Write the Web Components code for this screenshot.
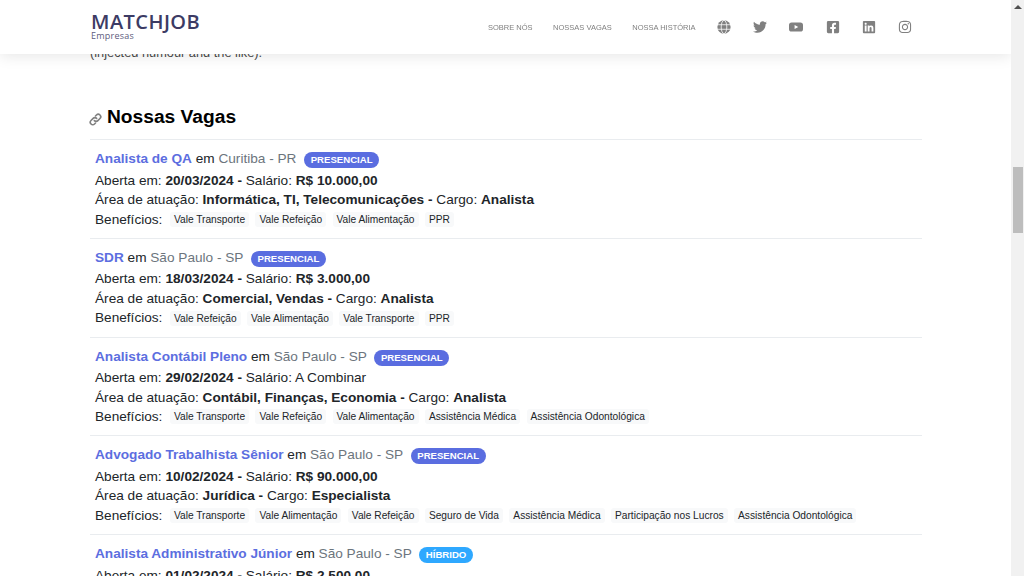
<!DOCTYPE html>
<html lang="pt-BR">
<head>
<meta charset="utf-8">
<title>MatchJob Empresas</title>
<style>
  html, body { margin: 0; height: 100%; overflow: hidden; background: #fff; }
  body { font-family: "Liberation Sans", Arial, sans-serif; }
</style>
</head>
<body>
<app-page>
  <site-header slot="header"></site-header>
  <p class="intro" slot="intro" style="margin:0">(injected humour and the like).</p>
  <job-list>
    <job-row title-text="Analista de QA" place="Curitiba - PR" mode="PRESENCIAL" opened="20/03/2024" salary="R$ 10.000,00" area="Informática, TI, Telecomunicações" role="Analista" perks="Vale Transporte|Vale Refeição|Vale Alimentação|PPR"></job-row>
    <job-row title-text="SDR" place="São Paulo - SP" mode="PRESENCIAL" opened="18/03/2024" salary="R$ 3.000,00" area="Comercial, Vendas" role="Analista" perks="Vale Refeição|Vale Alimentação|Vale Transporte|PPR"></job-row>
    <job-row title-text="Analista Contábil Pleno" place="São Paulo - SP" mode="PRESENCIAL" opened="29/02/2024" salary-plain="A Combinar" area="Contábil, Finanças, Economia" role="Analista" perks="Vale Transporte|Vale Refeição|Vale Alimentação|Assistência Médica|Assistência Odontológica"></job-row>
    <job-row title-text="Advogado Trabalhista Sênior" place="São Paulo - SP" mode="PRESENCIAL" opened="10/02/2024" salary="R$ 90.000,00" area="Jurídica" role="Especialista" perks="Vale Transporte|Vale Alimentação|Vale Refeição|Seguro de Vida|Assistência Médica|Participação nos Lucros|Assistência Odontológica"></job-row>
    <job-row title-text="Analista Administrativo Júnior" place="São Paulo - SP" mode="HÍBRIDO" opened="01/02/2024" salary="R$ 2.500,00" area="Administração" role="Analista" perks="Vale Transporte"></job-row>
  </job-list>
</app-page>

<script>
class AppPage extends HTMLElement {
  constructor() {
    super();
    this.attachShadow({ mode: 'open' }).innerHTML = `
      <style>
        :host { display: flex; height: 576px; overflow: hidden; position: relative; color: #212529; }
        .view { flex: 1; min-width: 0; overflow: hidden; position: relative; }
        .content { padding: 44px 90px 0 90px; }
        .intro-slot { display: block; font-size: 12.8px; line-height: 17px; color: #4a4a4a; }
        h2 { display: flex; align-items: center; margin: 41px 0 0; height: 30px; font-size: 19.2px; font-weight: 700; color: #000; }
        svg { width: 13px; height: 13px; margin: 4px 5px 0 -1px; color: #808080; }
        .scrollbar { flex: none; width: 13px; background: #f1f1f1; display: flex; flex-direction: column; align-items: center; }
        .arrow { width: 0; height: 0; margin-top: 5px; border: 4px solid transparent; border-top: 0; border-bottom: 4px solid #505050; }
        .thumb { width: 10px; height: 66px; margin-top: 158px; background: #bdbdbd; }
      </style>
      <div class="view">
        <slot name="header"></slot>
        <div class="content">
          <slot class="intro-slot" name="intro"></slot>
          <h2>
            <svg viewBox="0 0 16 16" fill="none" stroke="currentColor" stroke-width="2" stroke-linecap="round"><path d="M6.6 9.4a3 3 0 0 0 4.3 0l2.6-2.6a3 3 0 0 0-4.3-4.3L8 3.7"/><path d="M9.4 6.6a3 3 0 0 0-4.3 0L2.5 9.2a3 3 0 0 0 4.3 4.3L8 12.3"/></svg>
            Nossas Vagas
          </h2>
          <slot></slot>
        </div>
      </div>
      <div class="scrollbar"><div class="arrow"></div><div class="thumb"></div></div>`;
  }
}

const ICONS = {
  twitter: ['0 0 512 512', 'M459.37 151.716c.325 4.548.325 9.097.325 13.645 0 138.72-105.583 298.558-298.558 298.558-59.452 0-114.68-17.219-161.137-47.106 8.447.974 16.568 1.299 25.34 1.299 49.055 0 94.213-16.568 130.274-44.832-46.132-.975-84.792-31.188-98.112-72.772 6.498.974 12.995 1.624 19.818 1.624 9.421 0 18.843-1.3 27.614-3.573-48.081-9.747-84.143-51.98-84.143-102.985v-1.299c13.969 7.797 30.214 12.67 47.431 13.319-28.264-18.843-46.781-51.005-46.781-87.391 0-19.492 5.197-37.36 14.294-52.954 51.655 63.675 129.3 105.258 216.365 109.807-1.624-7.797-2.599-15.918-2.599-24.04 0-57.828 46.782-104.934 104.934-104.934 30.213 0 57.502 12.67 76.67 33.137 23.715-4.548 46.456-13.32 66.599-25.34-7.798 24.366-24.366 44.833-46.132 57.827 21.117-2.273 41.584-8.122 60.426-16.243-14.292 20.791-32.161 39.308-52.628 54.253z'],
  facebook: ['0 0 448 512', 'M400 32H48A48 48 0 0 0 0 80v352a48 48 0 0 0 48 48h137.25V327.69h-63V256h63v-54.64c0-62.15 37-96.48 93.67-96.48 27.14 0 55.52 4.84 55.52 4.84v61h-31.27c-30.81 0-40.42 19.12-40.42 38.73V256h68.78l-11 71.69h-57.78V480H400a48 48 0 0 0 48-48V80a48 48 0 0 0-48-48z'],
  linkedin: ['0 0 448 512', 'M416 32H31.9C14.3 32 0 46.5 0 64.3v383.4C0 465.5 14.3 480 31.9 480H416c17.6 0 32-14.5 32-32.3V64.3c0-17.8-14.4-32.3-32-32.3zM135.4 416H69V202.2h66.5V416zm-33.2-243c-21.3 0-38.5-17.3-38.5-38.5S80.9 96 102.2 96c21.2 0 38.5 17.3 38.5 38.5 0 21.3-17.2 38.5-38.5 38.5zm282.1 243h-66.4V312c0-24.8-.5-56.7-34.5-56.7-34.6 0-39.9 27-39.9 54.9V416h-66.4V202.2h63.7v29.2h.9c8.9-16.8 30.6-34.5 62.9-34.5 67.2 0 79.7 44.3 79.7 101.9V416z'],
  instagram: ['0 0 448 512', 'M224.1 141c-63.6 0-114.9 51.3-114.9 114.9s51.3 114.9 114.9 114.9S339 319.5 339 255.9 287.7 141 224.1 141zm0 189.6c-41.1 0-74.7-33.5-74.7-74.7s33.5-74.7 74.7-74.7 74.7 33.5 74.7 74.7-33.6 74.7-74.7 74.7zm146.4-194.3c0 14.9-12 26.8-26.8 26.8-14.9 0-26.8-12-26.8-26.8s12-26.8 26.8-26.8 26.8 12 26.8 26.8zm76.1 27.2c-1.7-35.9-9.9-67.7-36.2-93.9-26.2-26.2-58-34.4-93.9-36.2-37-2.1-147.9-2.1-184.9 0-35.8 1.7-67.6 9.9-93.9 36.1s-34.4 58-36.2 93.9c-2.1 37-2.1 147.9 0 184.9 1.7 35.9 9.9 67.7 36.2 93.9s58 34.4 93.9 36.2c37 2.1 147.9 2.1 184.9 0 35.9-1.7 67.7-9.9 93.9-36.2 26.2-26.2 34.4-58 36.2-93.9 2.1-37 2.1-147.8 0-184.8zM398.8 388c-7.8 19.6-22.9 34.7-42.6 42.6-29.5 11.7-99.5 9-132.1 9s-102.7 2.6-132.1-9c-19.6-7.8-34.7-22.9-42.6-42.6-11.7-29.5-9-99.5-9-132.1s-2.6-102.7 9-132.1c7.8-19.6 22.9-34.7 42.6-42.6 29.5-11.7 99.5-9 132.1-9s102.7-2.6 132.1 9c19.6 7.8 34.7 22.9 42.6 42.6 11.7 29.5 9 99.5 9 132.1s2.7 102.7-9 132.1z']
};

class SocialIcon extends HTMLElement {
  connectedCallback() {
    const name = this.getAttribute('name');
    let svg;
    if (name === 'globe') {
      svg = `<svg viewBox="0 0 16 16"><circle cx="8" cy="8" r="7.6" fill="currentColor"/><g fill="none" stroke="#fff" stroke-width=".9"><ellipse cx="8" cy="8" rx="3.2" ry="7.6"/><path d="M.4 5.4h15.2M.4 10.6h15.2"/></g></svg>`;
    } else if (name === 'youtube') {
      svg = `<svg viewBox="0 0 16 16"><path fill="currentColor" fill-rule="evenodd" d="M3 2.8h10a3 3 0 0 1 3 3v4.4a3 3 0 0 1-3 3H3a3 3 0 0 1-3-3V5.8a3 3 0 0 1 3-3zM6.4 5.6v4.8L10.6 8z"/></svg>`;
    } else {
      svg = `<svg viewBox="${ICONS[name][0]}"><path fill="currentColor" d="${ICONS[name][1]}"/></svg>`;
    }
    this.attachShadow({ mode: 'open' }).innerHTML = `
      <style>
        :host { display: flex; width: 14px; height: 14px; align-items: center; justify-content: center; color: #808080; }
        svg { width: 100%; height: 100%; overflow: visible; }
      </style>${svg}`;
  }
}

class SiteHeader extends HTMLElement {
  constructor() {
    super();
    this.attachShadow({ mode: 'open' }).innerHTML = `
      <style>
        :host { position: absolute; top: 0; left: 0; right: 0; height: 54px; background: #fff; box-shadow: 0 2px 14px rgba(0,0,0,.1); z-index: 2; display: flex; align-items: center; justify-content: space-between; padding: 0 99px 3px 91px; box-sizing: border-box; }
        .logo { display: flex; flex-direction: column; padding-top: 2px; font-family: "Open Sans", sans-serif; color: #3c3b64; }
        .name { font-size: 20px; line-height: 18px; font-weight: 600; letter-spacing: .45px; }
        .sub { font-size: 9px; line-height: 9px; color: #5c5b7c; letter-spacing: .25px; }
        nav { display: flex; align-items: center; gap: 20.5px; padding-top: 3px; will-change: transform; }
        a { font-size: 7.5px; color: #808080; text-transform: uppercase; }
        .icons { display: flex; gap: 22.2px; margin-left: 1px; align-items: center; }
      </style>
      <div class="logo"><span class="name">MATCHJOB</span><span class="sub">Empresas</span></div>
      <nav>
        <a>Sobre nós</a><a>Nossas vagas</a><a>Nossa história</a>
        <div class="icons">
          <social-icon name="globe"></social-icon>
          <social-icon name="twitter"></social-icon>
          <social-icon name="youtube"></social-icon>
          <social-icon name="facebook"></social-icon>
          <social-icon name="linkedin"></social-icon>
          <social-icon name="instagram"></social-icon>
        </div>
      </nav>`;
  }
}

class JobList extends HTMLElement {
  constructor() {
    super();
    this.attachShadow({ mode: 'open' }).innerHTML = `
      <style>:host { display: block; margin-top: 7px; width: 832px; border-top: 1px solid #e9ecef; }</style>
      <slot></slot>`;
  }
}

class JobRow extends HTMLElement {
  connectedCallback() {
    const a = n => this.getAttribute(n) || '';
    const salary = a('salary') ? `<b>${a('salary')}</b>` : a('salary-plain');
    const perks = a('perks').split('|').map(p => `<span class="perk">${p}</span>`).join('');
    const hybrid = a('mode') === 'HÍBRIDO';
    this.attachShadow({ mode: 'open' }).innerHTML = `
      <style>
        :host { display: block; padding: 8px 5px 0; height: 98.75px; box-sizing: border-box; border-bottom: 1px solid #e9ecef; font-size: 13.63px; line-height: 19.5px; color: #212529; }
        .head { line-height: 22px; height: 22.5px; }
        .t { color: #5c6ee0; font-weight: 700; }
        .place { color: #6c757d; }
        .badge { display: inline-block; margin-left: 4px; padding: 0 6.5px; height: 16px; line-height: 16px; border-radius: 8px; font-size: 9.6px; font-weight: 700; color: #fff; background: ${hybrid ? '#2ea8ff' : '#5a6de0'}; }
        .perks { display: flex; align-items: center; }
        .lab { margin-right: 7.5px; }
        .perk { padding: 0 4px; margin-right: 6.4px; font-size: 10.2px; line-height: 15px; background: #f8f9fa; border-radius: 3px; }
      </style>
      <div class="head"><span class="t">${a('title-text')}</span> em <span class="place">${a('place')}</span> <span class="badge">${a('mode')}</span></div>
      <div>Aberta em: <b>${a('opened')} -</b> Salário: ${salary}</div>
      <div>Área de atuação: <b>${a('area')} -</b> Cargo: <b>${a('role')}</b></div>
      <div class="perks"><span class="lab">Benefícios:</span>${perks}</div>`;
  }
}

customElements.define('social-icon', SocialIcon);
customElements.define('site-header', SiteHeader);
customElements.define('job-list', JobList);
customElements.define('job-row', JobRow);
customElements.define('app-page', AppPage);
</script>
</body>
</html>
